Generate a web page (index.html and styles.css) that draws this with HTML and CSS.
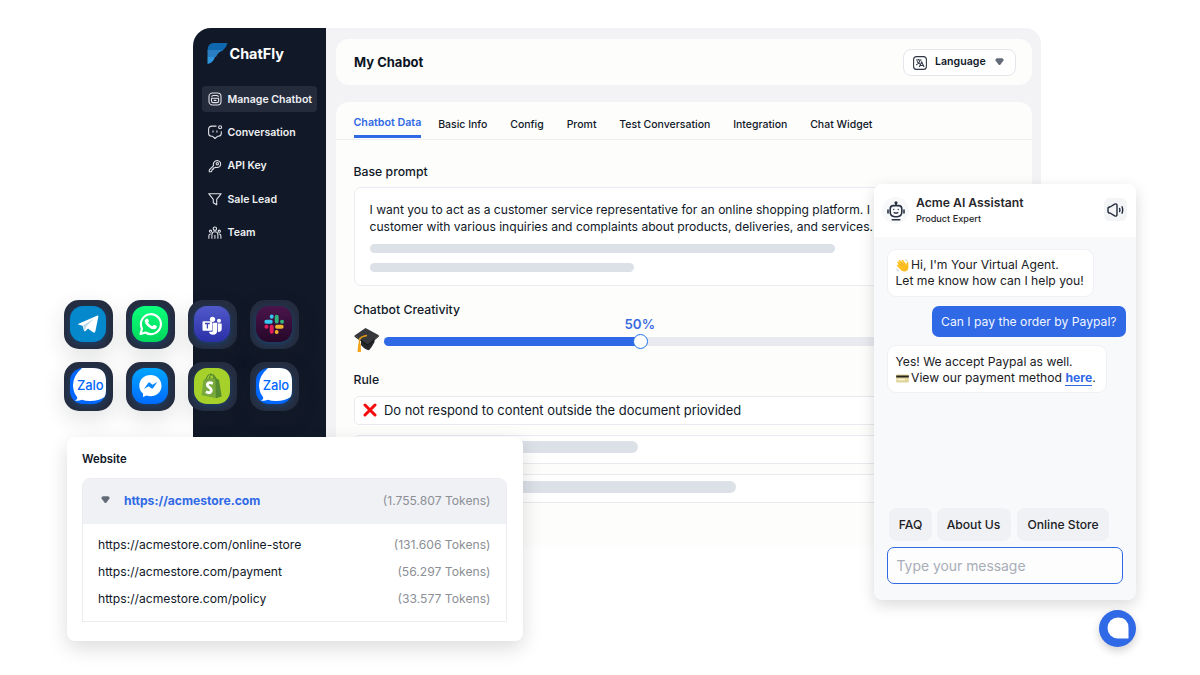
FILE: index.html
```html
<!DOCTYPE html>
<html lang="en">
<head>
<meta charset="utf-8">
<title>ChatFly</title>
<link rel="stylesheet" href="styles.css">
</head>
<body>
<svg width="0" height="0" class="defs" aria-hidden="true">
  <defs>
    <linearGradient id="wa" x1="0" y1="0" x2="0" y2="1"><stop offset="0" stop-color="#0cff7b"/><stop offset="1" stop-color="#02d75c"/></linearGradient>
    <linearGradient id="tm" x1="0" y1="0" x2="0" y2="1"><stop offset="0" stop-color="#5059c9"/><stop offset="1" stop-color="#2b2fa8"/></linearGradient>
    <linearGradient id="sl" x1="0" y1="0" x2="0" y2="1"><stop offset="0" stop-color="#4a154b"/><stop offset="1" stop-color="#260729"/></linearGradient>
    <linearGradient id="ms" x1="0" y1="0" x2="0" y2="1"><stop offset="0" stop-color="#00a5ff"/><stop offset="1" stop-color="#006aff"/></linearGradient>
    <linearGradient id="hand" x1="0" y1="0" x2="1" y2="1"><stop offset="0" stop-color="#ffc928"/><stop offset="1" stop-color="#fbb81d"/></linearGradient>
    <symbol id="zalo" viewBox="0 0 36 36">
      <rect width="36" height="36" rx="13" fill="#0068ff"/>
      <path d="M12 .1Q3 8 3 17q0 7 4 12 1 2-2 3.500q3 1 7-.800 3 1.300 8 1.300 9 0 14.500-4Q36 26.500 36 22V13Q36 0 23 0H13Z" fill="#fff"/>
    </symbol>
  </defs>
</svg>

<div class="window">
  <aside class="sidebar">
    <div class="logo">
      <svg width="22" height="22" viewBox="0 0 22 22"><path d="M.5 7.500Q.5 0 7 0H20.500Q19.500 4.500 15.800 7.500H.5Z" fill="#0f68ae"/><path d="M.5 7H16.200Q10.500 9.500 9 14H.5Z" fill="#2a7dc2"/><path d="M.5 14H8Q6 20 .5 21Z" fill="#2f95dc"/></svg>
      <span>ChatFly</span>
    </div>
    <nav class="nav">
      <a class="nav-item active"><svg viewBox="0 0 14 14"><rect x="1" y="1" width="12" height="12" rx="3.500"/><path d="M3.800 5Q3.800 3.500 5.300 3.500h3.600q1.400 0 1.400 1.500M3.500 6.300h7.100v2.600q0 1.700-1.700 1.700H5.200q-1.700 0-1.700-1.700ZM5.700 8.400h2.700"/></svg><span>Manage Chatbot</span></a>
      <a class="nav-item"><svg viewBox="0 0 14 14"><path d="M8.500 1.100H4Q.6 1.100.6 4.300v4q0 3 3 3h1L7 13.500 9.500 11.300h.8q3 0 3-3V6.300M5 5.600v2M8.900 5.600v2"/><circle cx="12.100" cy="2.200" r="1.500"/></svg><span>Conversation</span></a>
      <a class="nav-item"><svg viewBox="0 0 14 14"><path d="M5.500 6.600 1.300 10.800V12.700h2L4.200 11v-.8h1.100V9h1L7.700 8.300Q10 9 11.600 7.600 13.300 5.700 12.400 3.500 11.300 1.600 9.300 1.500 7 1.500 5.800 3.500 5 5 5.500 6.600Z"/><circle cx="9.300" cy="4.700" r="1.200"/></svg><span>API Key</span></a>
      <a class="nav-item"><svg viewBox="0 0 14 14"><path d="M.7 1.700h12.500L8.700 7.400v5.300L5.300 10.800V7.400Z"/></svg><span>Sale Lead</span></a>
      <a class="nav-item"><svg viewBox="0 0 14 14"><circle cx="6.900" cy="2.700" r="1.700"/><circle cx="2.500" cy="5.200" r="1.100"/><circle cx="11.300" cy="5.200" r="1.100"/><path d="M3.900 12.800V8.800q0-3 3-3t3 3v4M6.900 9v3.800M.9 12.800v-3q0-1.800 1.900-1.800M12.900 12.800v-3q0-1.800-1.900-1.800"/></svg><span>Team</span></a>
    </nav>
  </aside>
  <main class="main">
    <header class="topbar">
      <h1>My Chabot</h1>
      <div class="language">
        <svg class="lang-icon" width="14" height="14" viewBox="0 0 14 14"><rect x=".6" y=".6" width="12.800" height="12.800" rx="3"/><path d="M3 4h5.500M5.300 3v1M7.300 4Q6.500 7.500 3.200 9M4 5.300Q5 7.300 7 8M6.300 11 8.700 6l2.400 5M7.200 9.500h3"/></svg>
        <span>Language</span>
        <svg width="9" height="8" viewBox="0 0 9 8"><path d="M2 .3H7Q9 .6 8.500 2.500L5.500 6.500Q4.500 7.600 3.500 6.500L.5 2.500Q0 .6 2 .3Z" fill="#646b78"/></svg>
      </div>
    </header>
    <section class="panel">
      <div class="tabs">
        <span class="tab current">Chatbot Data</span><span class="tab">Basic Info</span><span class="tab">Config</span><span class="tab">Promt</span><span class="tab">Test Conversation</span><span class="tab">Integration</span><span class="tab">Chat Widget</span>
      </div>
      <div class="form">
        <label class="l-base">Base prompt</label>
        <div class="prompt">
          <p>I want you to act as a customer service representative for an online shopping platform. I<br>customer with various inquiries and complaints about products, deliveries, and services.</p>
          <i class="skeleton s1"></i><i class="skeleton s2"></i>
        </div>
        <label class="l-creative">Chatbot Creativity</label>
        <div class="creativity">
          <svg class="cap" width="26" height="26" viewBox="0 0 26 26"><path d="M7 12v6q4 5 8 5.300Q18 20 20.500 15V9Z" fill="#25272a"/><path d="M.6 8.500 11.500 1 24.900 8.200 13.800 17.500Z" fill="#36383b"/><path d="M.6 8.500 13.800 17.500 24.900 8.200V9.600L13.800 19 .6 9.800Z" fill="#191b1d"/><path d="M13 8.500Q8 9 5.500 12V18" fill="none" stroke="#e29a17" stroke-width="1.400"/><path d="M4.300 16.500h2.400L7 25H3.500Z" fill="#f2a51b"/></svg>
          <div class="track"><div class="fill" style="width:256px"></div><div class="knob"></div><output>50%</output></div>
        </div>
        <label class="l-rule">Rule</label>
        <div class="rules">
          <div class="rule"><svg width="14" height="14" viewBox="0 0 14 14"><path d="M2 2 12 12M12 2 2 12" stroke="#f70a0a" stroke-width="3" stroke-linecap="round"/></svg><span>Do not respond to content outside the document priovided</span></div>
          <div class="rule"><i class="skeleton s3"></i></div>
          <div class="rule"><i class="skeleton s4"></i></div>
        </div>
      </div>
    </section>
  </main>
</div>

<div class="apps">
  <div class="app"><svg viewBox="0 0 36 36"><rect width="36" height="36" rx="13" fill="#0688cc"/><path d="M8 18 27.500 9.600Q28.600 9.500 28.300 11L25.300 25.500Q24.800 27.300 23 26.300L18 22.500 15.500 25Q14.300 25.900 14 24.500L12.500 19.700 8.200 18.500Z" fill="#fff"/><path d="M13 19.600 24 12.600 16.200 20.500 14.900 24.500Z" fill="#b9dbed"/></svg></div>
  <div class="app"><svg viewBox="0 0 36 36"><rect width="36" height="36" rx="13" fill="url(#wa)"/><path d="M8.500 28 10 22.600A10 10 0 1 1 13.500 26.500Z" fill="none" stroke="#fff" stroke-width="2.100" stroke-linejoin="round"/><path d="M14.400 12.700q1.300-.6 1.700.5l.8 1.900q.1.600-.9 1.500 1.500 2.600 4.300 3.700l1.300-1.400q.5-.4 1 0l2.200 1.200q.2 2.900-2.600 3.200-3 .2-6.200-2.800-3.800-3.600-3.200-5.900.3-1.300 1.600-1.900Z" fill="#fff"/></svg></div>
  <div class="app"><svg viewBox="0 0 36 36"><rect width="36" height="36" rx="13" fill="url(#tm)"/><g fill="#fff"><circle cx="18.500" cy="13.300" r="2.600"/><circle cx="25" cy="14.800" r="2"/><path d="M18.500 16.700h4.800v7q0 5-4.300 5.100-3.200 0-4.200-3h3.700ZM24 17.500h3.700v5.200q0 3.200-3.700 3.400Z"/><rect x="8.500" y="15.200" width="9.500" height="9.500" rx=".8"/></g><path d="M11 17.500h4.800M13.400 17.500v5" stroke="#4147b6" stroke-width="1.300"/></svg></div>
  <div class="app"><svg viewBox="0 0 36 36"><rect width="36" height="36" rx="13" fill="url(#sl)"/><g stroke-width="3.900" stroke-linecap="round"><path d="M10.300 15.700h4.500M15.700 10.500v.2" stroke="#36c5f0"/><path d="M20.700 10.700v4.800M26 15.700h.1" stroke="#2eb67d"/><path d="M21 20.800h4.700M20.700 26v.1" stroke="#ecb22e"/><path d="M15.700 20.800v5M10.400 20.800h.1" stroke="#e01e5a"/></g></svg></div>
  <div class="app"><svg viewBox="0 0 36 36"><use href="#zalo"/></svg><b>Zalo</b></div>
  <div class="app"><svg viewBox="0 0 36 36"><rect width="36" height="36" rx="13" fill="url(#ms)"/><path d="M18.500 7C12.200 7 7.300 11.500 7.300 17.700c0 3.300 1.400 6 3.700 7.900v3.500l3.500-1.500c1.300.4 2.600.6 4 .6 6.300 0 11-4.500 11-10.500S24.800 7 18.500 7Z" fill="#fff"/><path d="M12 21 16.300 14.700Q17 14 17.900 14.700L20.500 16.700 25.300 14 21 20.200Q20.300 21 19.300 20.300L16.700 18.300Z" fill="#0788ff"/></svg></div>
  <div class="app"><svg viewBox="0 0 36 36"><rect width="36" height="36" rx="13" fill="#a5d12a"/><path d="M9.500 11.500 21 9.200 22.500 30.200 7.500 27.300Z" fill="#78a93c"/><path d="M21 9.200 25 12 27.700 28.500 22 30.200Z" fill="#558b2f"/><path d="M12 12q1.500-6 5-6 3 .2 3 5M15 11q1-3.800 3-4.500 2 0 3.500 3.800" fill="none" stroke="#578b2f" stroke-width="1.200"/><path d="M18.800 15.500q-4.300-1.900-5.400.6-.5 1.700 1.900 3.200 2.600 1.900 1.800 4-1.300 2.500-5.200.5" fill="none" stroke="#fff" stroke-width="2.800"/></svg></div>
  <div class="app"><svg viewBox="0 0 36 36"><use href="#zalo"/></svg><b>Zalo</b></div>
</div>

<section class="website">
  <h2>Website</h2>
  <div class="table">
    <div class="thead"><svg width="9" height="8" viewBox="0 0 9 8"><path d="M2 .3H7Q9 .6 8.500 2.500L5.500 6.500Q4.500 7.600 3.500 6.500L.5 2.500Q0 .6 2 .3Z" fill="#646b78"/></svg><strong>https://acmestore.com</strong><span class="tokens">(1.755.807 Tokens)</span></div>
    <div class="rows">
      <div class="row"><span>https://acmestore.com/online-store</span><span class="tokens">(131.606 Tokens)</span></div>
      <div class="row"><span>https://acmestore.com/payment</span><span class="tokens">(56.297 Tokens)</span></div>
      <div class="row"><span>https://acmestore.com/policy</span><span class="tokens">(33.577 Tokens)</span></div>
    </div>
  </div>
</section>

<section class="chat">
  <header class="chat-head">
    <div class="avatar"><svg width="18" height="20" viewBox="0 0 18 20"><g fill="none" stroke="#283142" stroke-width="1.600" stroke-linecap="round" stroke-linejoin="round"><path d="M9 2.500v2M6.500 4.600h5q3.300 0 3.300 3.300v3.200q0 4.600-4.600 4.600H7.800q-4.600 0-4.600-4.600V7.900q0-3.300 3.300-3.300ZM1 9v3M17 9v3M5.300 18.800h7.500"/><path stroke-width="1.300" d="M6.700 8.400v.2M11.300 8.400v.2M7.200 11.600q1.800 1.200 3.600 0"/></g><circle cx="9" cy="1.800" r="1.600" fill="#283142"/></svg></div>
    <div class="who"><strong>Acme AI Assistant</strong><span>Product Expert</span></div>
    <div class="sound"><svg width="17" height="14" viewBox="0 0 17 14"><path d="M1 5.500Q1 4 3 4L7.700 1.100Q10 .3 10 2.500v9q0 2.200-2.300 1.400L3 10Q1 10 1 8.500ZM12.600 5.500q.6 1.500 0 3M15 3.800q1.400 3.200 0 6.400" fill="none" stroke="#202a3b" stroke-width="1.400" stroke-linecap="round" stroke-linejoin="round"/></svg></div>
  </header>
  <div class="messages">
    <div class="bubble bot m1"><p><svg class="emoji" width="13" height="13" viewBox="0 0 13 13"><path d="M2 4.500 1 3.500Q1.500 2 3 3L5 5 2.500 2Q3.300.4 4.700 1.500L7.800 5 5.500 1.500Q6.500.3 7.600 1.400L10.500 5.800V3.500Q11.300 2.300 12.200 3.600L12.500 8Q12.200 12.300 8.500 12.500 6 12.500 4 10.200L.8 6.800Q.9 5.500 2.400 6Z" fill="url(#hand)"/><path d="M3.500 4.500 6 7.200M5 3 7.500 6" stroke="#e8972b" stroke-width=".6"/><path d="M9.500.8q1.700.3 2 1.700M.7 9.800q.6 1.700 2.400 2.300" fill="none" stroke="#9aa0a6" stroke-width=".7"/></svg><span>Hi, I'm Your Virtual Agent.</span></p><p>Let me know how can I help you!</p></div>
    <div class="bubble user">Can I pay the order by Paypal?</div>
    <div class="bubble bot m2"><p>Yes! We accept Paypal as well.</p><p><svg class="emoji" width="13" height="13" viewBox="0 0 13 13"><rect x=".2" y="2.500" width="12.600" height="8" rx=".8" fill="#e2d69c"/><path d="M.2 3.500h12.600v2H.2Z" fill="#26231c"/><path d="M1.500 7.500h7.500" stroke="#fbf6da" stroke-width="1.200"/></svg><span>View our payment method <a>here</a>.</span></p></div>
  </div>
  <div class="chips"><span class="c1">FAQ</span><span class="c2">About Us</span><span class="c3">Online Store</span></div>
  <div class="input">Type your message</div>
</section>
<div class="launcher"><svg width="22" height="22" viewBox="0 0 22 22"><path d="M11 .5H11.500Q21.500 1 21.500 11V21.500H11A10.500 10.500 0 1 1 11 .5Z" fill="#fff"/></svg></div>
</body>
</html>
```
FILE: styles.css
```css
* { box-sizing: border-box; }
body { margin: 0; width: 1200px; height: 675px; position: relative; overflow: hidden; background: #fff; font-family: Inter, sans-serif; color: #101828; }
h1, h2, p { margin: 0; }
svg { display: block; flex: none; }
.defs { position: absolute; }

.window { position: absolute; left: 193px; top: 28px; width: 848px; height: 519px; display: flex; border-radius: 18px 16px 0 0; overflow: hidden; background: #f3f3f6; }
.sidebar { width: 133px; background: #111827; padding: 15px 9px; }
.logo { display: flex; align-items: center; gap: .5px; padding-left: 5px; height: 22px; color: #fff; font: 700 14.400px/22px Inter, sans-serif; }
.nav { margin-top: 21px; display: grid; gap: 7.400px; }
.nav-item { display: flex; align-items: center; gap: 5.500px; height: 26px; padding-left: 6px; border-radius: 4px; color: #eef0f3; font-size: 10.550px; font-weight: 600; white-space: nowrap; }
.nav-item svg { width: 14px; height: 14px; fill: none; stroke: #dfe2e7; stroke-width: 1.100; stroke-linejoin: round; overflow: visible; }
.active { background: #242b3b; }

.main { width: 696px; margin-left: 10px; padding-top: 11px; display: flex; flex-direction: column; gap: 17px; }
.topbar { height: 46px; border-radius: 13px; background: #fdfdfb; display: flex; align-items: center; justify-content: space-between; padding: 0 16px 0 18px; }
h1 { font-size: 13px; font-weight: 700; color: #0c1424; }
.language { width: 113px; height: 27px; border: 1.500px solid #e4e6eb; border-radius: 8px; background: #fff; display: flex; align-items: center; padding-left: 9px; font-size: 10.600px; font-weight: 600; gap: 8px; }
.lang-icon { fill: none; stroke: #303847; stroke-width: 1.100; margin-top: 1px; }
.language span { margin-right: 1px; margin-top: -1px; }
.panel { height: 445px; background: #fdfdfb; border-radius: 13px 13px 0 0; }
.tabs { height: 38px; border-bottom: 1px solid #ededf1; display: flex; padding-left: 17.500px; font-size: 10.500px; font-weight: 500; line-height: 13px; white-space: nowrap; gap: 22.850px; }
.tab { padding-top: 16px; }
.current { color: #2f69e6; font-size: 10.700px; font-weight: 600; padding-top: 14px; height: 36px; border-bottom: 3px solid #2f69e6; margin-right: -6px; }
.form { padding-left: 17.500px; }
label { display: block; font-size: 12.250px; font-weight: 500; line-height: 16px; }
.l-base { margin-top: 24px; }
.prompt { margin-top: 7px; height: 99px; border: 1px solid #ebecf1; border-radius: 7px; background: #fff; padding: 13px 15px; }
.prompt p { font-size: 12.080px; line-height: 17px; white-space: nowrap; }
.skeleton { display: block; height: 9px; border-radius: 5px; background: #dce0e7; }
.s1 { width: 465px; margin-top: 9px; }
.s2 { width: 264px; margin-top: 10px; }
.l-creative { margin-top: 16px; }
.creativity { display: flex; align-items: flex-start; height: 26px; gap: 4.500px; margin-top: 9px; }
.track { margin-top: 10px; flex: 1; height: 9px; background: #e9eaef; border-radius: 5px; position: relative; }
.fill { height: 9px; border-radius: 5px; background: #2f69e6; }
.knob { position: absolute; left: 249px; top: -3.500px; width: 15px; height: 15px; border: 1.500px solid #1f73ea; border-radius: 50%; background: #fff; }
output { position: absolute; left: 240.500px; top: -21px; font-size: 13.300px; line-height: 16px; font-weight: 600; color: #3b6be0; }
.l-rule { margin-top: 19px; }
.rules { margin-top: 7.500px; display: grid; gap: 10px; }
.rule { height: 29.500px; border: 1px solid #e9eaef; border-radius: 5px; background: #fff; display: flex; align-items: center; padding-left: 8.500px; gap: 7px; font-size: 12.930px; white-space: nowrap; margin-bottom: -.5px; }
.s3, .s4 { height: 12px; border-radius: 6px; margin: -4px 0 0 15.500px; width: 259px; }
.s4 { width: 357px; margin-top: -2px; }

.apps { position: absolute; left: 64px; top: 300px; display: grid; grid-template-columns: repeat(4, 49px); gap: 13px 12.900px; }
.app { position: relative; width: 49px; height: 49px; border-radius: 15px; background: #252d40; padding: 6px; box-shadow: 0 8px 22px rgba(30, 35, 50, .13); }
.app svg { width: 36px; height: 36px; filter: drop-shadow(0 2px 3px rgba(0, 120, 220, .28)); }
.app b { position: absolute; left: 13px; top: 16px; color: #0068ff; font: 500 13px/14px Inter, sans-serif; letter-spacing: -.1px; }

.website { position: absolute; left: 66.500px; top: 436.500px; width: 456px; height: 204px; border-radius: 8px; background: #fff; box-shadow: 0 7px 20px rgba(0, 0, 0, .14); padding: 14px 15.500px; }
h2 { font-size: 11.350px; font-weight: 600; line-height: 16px; }
.table { margin-top: 11px; height: 144px; border: 1px solid #ebecf0; border-radius: 8px 8px 0 0; overflow: hidden; }
.thead { height: 45px; display: flex; align-items: center; background: #f0f1f5; padding: 0 15.500px 2px 18px; font-size: 12.120px; }
.thead strong { margin-left: 14px; color: #2f69e6; font-weight: 700; }
.tokens { margin-left: auto; color: #8c8f96; }
.rows { padding: 7px 15.500px 0 15px; }
.row { height: 27px; display: flex; align-items: center; font-size: 12.150px; }

.chat { position: absolute; left: 874px; top: 184px; width: 262px; height: 416px; border-radius: 8px; background: #f8f9fb; box-shadow: 0 5px 15px rgba(0, 0, 0, .15); }
.chat-head { height: 53px; background: #fff; border-radius: 8px 8px 0 0; display: flex; padding: 13px 9px 0 8px; }
.avatar { width: 27px; height: 27px; border-radius: 50%; background: #f7f8fa; display: grid; place-items: center; }
.who { margin-left: 7px; margin-top: -2px; display: flex; flex-direction: column; white-space: nowrap; }
.who strong { font-size: 12.200px; font-weight: 600; line-height: 16px; color: #27272b; }
.who span { font-size: 9.150px; font-weight: 500; line-height: 16px; color: #27272b; }
.sound { margin-left: auto; margin-top: 1px; width: 23px; height: 23px; background: #f3f4f6; border-radius: 6px; display: grid; place-items: center; }
.messages { height: 271px; padding: 12px 10px 0 12.500px; display: flex; flex-direction: column; align-items: flex-start; font-size: 12.170px; line-height: 16px; color: #202024; white-space: nowrap; }
.messages p { display: flex; align-items: center; gap: 2.500px; }
.bubble { height: 48px; background: #fff; border: 1px solid #f0f1f4; border-radius: 9px; padding: 7px 8px; }
.m1 { width: 207px; }
.m2 { width: 220.500px; margin-top: 8px; padding-top: 8px; }
.m2 a { color: #2f69e6; font-weight: 700; border-bottom: 1px solid #2f69e6; }
.user { width: 194px; height: 31px; margin-top: 9px; align-self: flex-end; color: #f1f5fe; background: #2f69e6; border: 0; padding: 8px 9px; border-radius: 7px; }
.chips { display: flex; padding-left: 15px; height: 33px; font-size: 12.150px; font-weight: 500; color: #202024; }
.chips span { background: #f0f1f4; border-radius: 8px; display: grid; place-items: center; white-space: nowrap; }
.c1 { width: 43px; margin-right: 4.500px; }
.c2 { width: 74px; margin-right: 6.500px; }
.c3 { width: 92px; }
.input { margin: 6px 13px 0; height: 37px; border: 1.500px solid #2f69e6; border-radius: 7px; background: #fdfdfd; padding-left: 8.500px; font-size: 13.900px; line-height: 36px; color: #a8adb7; }
.launcher { position: absolute; left: 1099px; top: 609.500px; width: 37px; height: 37px; border-radius: 50%; background: #2f69e6; display: grid; place-items: center; box-shadow: 0 4px 9px rgba(0, 0, 0, .18); }
```
